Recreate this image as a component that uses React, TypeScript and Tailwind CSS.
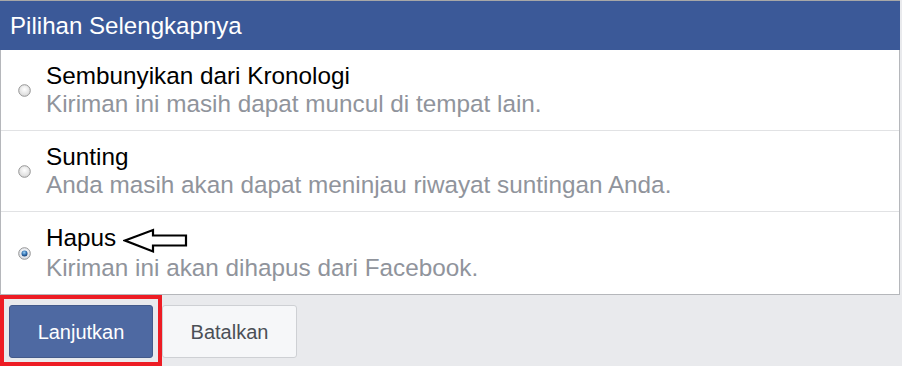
import React from "react";

const font = { fontFamily: '"Liberation Sans", Arial, sans-serif' };

const Radio = ({ checked }: { checked?: boolean }) => (
  <svg width="13" height="13" viewBox="0 0 13 13" className="shrink-0">
    <defs>
      <radialGradient id={checked ? "rg-on" : "rg-off"} cx="50%" cy="40%" r="60%">
        <stop offset="0%" stopColor="#ffffff" />
        <stop offset="100%" stopColor={checked ? "#d6dbe3" : "#d8d8d8"} />
      </radialGradient>
      <radialGradient id="dot" cx="45%" cy="35%" r="65%">
        <stop offset="0%" stopColor="#9fd2f5" />
        <stop offset="60%" stopColor="#2f6fb1" />
        <stop offset="100%" stopColor="#1c3f6e" />
      </radialGradient>
    </defs>
    <circle cx="6.5" cy="6.5" r="5.8" fill={`url(#${checked ? "rg-on" : "rg-off"})`} stroke="#959595" strokeWidth="1" />
    {checked && <circle cx="6.5" cy="6.5" r="3" fill="url(#dot)" />}
  </svg>
);

const Arrow = () => (
  <svg width="66" height="26" viewBox="0 0 66 26" className="ml-[7px] mt-[4px]">
    <polygon
      points="2,12.5 30,2 30,7.5 63,7.5 63,17.5 30,17.5 30,23.5"
      fill="#ffffff"
      stroke="#000000"
      strokeWidth="2.2"
      strokeLinejoin="miter"
    />
  </svg>
);

interface OptionProps {
  title: string;
  desc: string;
  checked?: boolean;
  first?: boolean;
  arrow?: boolean;
}

const Option = ({ title, desc, checked, first, arrow }: OptionProps) => (
  <div
    className={
      first
        ? "flex items-center pt-[12px] pb-[12px] pl-[17px]"
        : "flex items-center border-t border-[#e1e2e4] pt-[12px] pb-[12px] pl-[17px]"
    }
  >
    <Radio checked={checked} />
    <div className="ml-[15px] text-[24.3px] leading-[28px]">
      <div className="flex items-start text-black">
        <span>{title}</span>
        {arrow && <Arrow />}
      </div>
      <div className="text-[#90949c]">{desc}</div>
    </div>
  </div>
);

export default function App() {
  return (
    <div className="w-[902px] h-[366px] bg-[#e9eaed] overflow-hidden" style={font}>
      <div className="w-[900px]">
        <div className="h-[50px] border-t border-[#a7a7a7] bg-[#3b5998] pl-[10px] flex items-center">
          <span className="text-white text-[24.1px] leading-[28px]">Pilihan Selengkapnya</span>
        </div>
        <div className="bg-white border-l border-r border-b border-[#b5b7bb]">
          <Option
            first
            title="Sembunyikan dari Kronologi"
            desc="Kiriman ini masih dapat muncul di tempat lain."
          />
          <Option title="Sunting" desc="Anda masih akan dapat meninjau riwayat suntingan Anda." />
          <Option
            checked
            arrow
            title="Hapus"
            desc="Kiriman ini akan dihapus dari Facebook."
          />
        </div>
        <div className="flex items-start">
          <div className="border-4 border-[#ed1c24] pt-[6px] px-[5px] pb-[4px]">
            <button className="w-[144px] h-[53px] bg-[#4e69a2] border border-[#435a8b] rounded-[3px] text-white text-[20px]">
              Lanjutkan
            </button>
          </div>
          <button className="mt-[10px] w-[135px] h-[53px] bg-[#f6f7f9] border border-[#ced0d4] rounded-[3px] text-[#4b4f56] text-[20px]">
            Batalkan
          </button>
        </div>
      </div>
    </div>
  );
}
